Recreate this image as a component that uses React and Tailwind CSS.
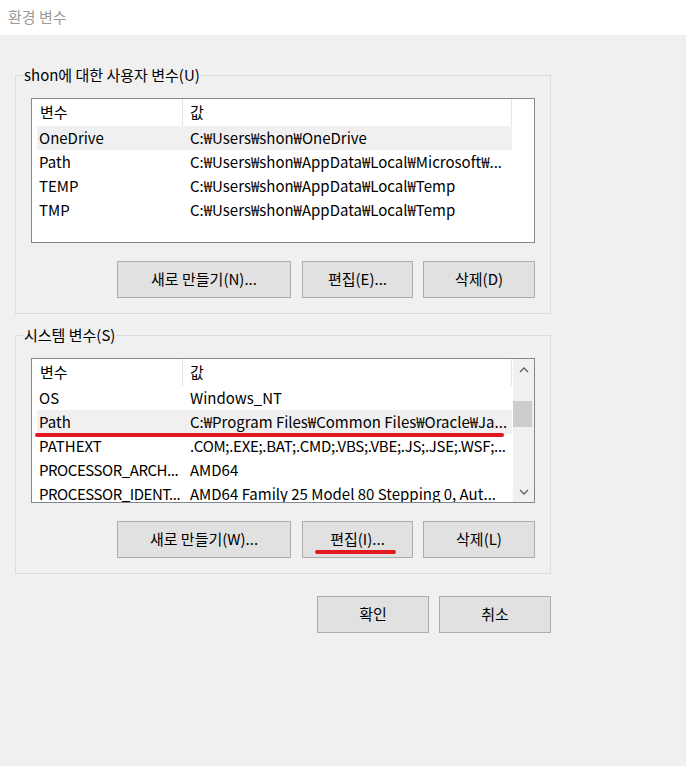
import React from 'react';

const userVars = [
  { name: 'OneDrive', value: 'C:₩Users₩shon₩OneDrive', selected: true },
  { name: 'Path', value: 'C:₩Users₩shon₩AppData₩Local₩Microsoft₩...' },
  { name: 'TEMP', value: 'C:₩Users₩shon₩AppData₩Local₩Temp' },
  { name: 'TMP', value: 'C:₩Users₩shon₩AppData₩Local₩Temp' },
];

// tightName / tightValue: Malgun's capitals are narrower than Noto's, squeeze a bit
const systemVars = [
  { name: 'OS', value: 'Windows_NT' },
  { name: 'Path', value: 'C:₩Program Files₩Common Files₩Oracle₩Ja...', selected: true, marked: true },
  { name: 'PATHEXT', value: '.COM;.EXE;.BAT;.CMD;.VBS;.VBE;.JS;.JSE;.WSF;...', tightValue: true },
  { name: 'PROCESSOR_ARCH...', value: 'AMD64', tightName: true },
  { name: 'PROCESSOR_IDENT...', value: 'AMD64 Family 25 Model 80 Stepping 0, Aut...', tightName: true },
];

function Button({ children, width, className = '', marked }) {
  return (
    <button
      type="button"
      className={`relative h-[37px] ${width} border border-[#adadad] bg-[#e1e1e1] flex items-center justify-center text-[15px] text-black ${className}`}
    >
      {children}
      {marked && (
        <span className="absolute left-[12px] top-[28px] w-[81px] h-[4px] rounded-full bg-[#e3191f]" />
      )}
    </button>
  );
}

function ScrollBar() {
  return (
    <div className="w-[21px] self-stretch bg-[#f0f0f0] flex flex-col">
      <div className="h-[21px] flex items-center justify-center">
        <svg width="10" height="6" viewBox="0 0 10 6" fill="none">
          <path d="M1 5 L5 1 L9 5" stroke="#606060" strokeWidth="1.4" />
        </svg>
      </div>
      <div className="h-[21px]" />
      <div className="h-[26px] w-[19px] bg-[#cdcdcd]" />
      <div className="flex-1" />
      <div className="h-[21px] flex items-center justify-center">
        <svg width="10" height="6" viewBox="0 0 10 6" fill="none">
          <path d="M1 1 L5 5 L9 1" stroke="#606060" strokeWidth="1.4" />
        </svg>
      </div>
    </div>
  );
}

function ListView({ rows, scroll }) {
  return (
    <div className="w-[504px] h-[145px] border border-[#828790] bg-white flex overflow-hidden">
      <div className="pl-[5px] w-[480px] shrink-0">
        {/* header */}
        <div className="flex h-[27px] w-[475px]">
          <div className="w-[146px] pl-[3px] border-r border-[#e5e5e5] flex items-center">변수</div>
          <div className="w-[329px] pl-[7px] border-r border-[#e5e5e5] flex items-center">값</div>
        </div>
        {rows.map(r => (
          <div
            key={r.name}
            className={`relative flex h-[24px] w-[475px] items-center ${r.selected ? 'bg-[#f0f0f0]' : ''}`}
          >
            <div className={`w-[146px] pl-[2px] whitespace-nowrap overflow-hidden ${r.tightName ? 'tracking-[-0.45px]' : ''}`}>
              {r.name}
            </div>
            <div className={`flex-1 pl-[7px] whitespace-nowrap overflow-hidden ${r.tightValue ? 'tracking-[-0.3px]' : ''}`}>
              {r.value}
            </div>
            {r.marked && (
              <span className="absolute left-[-2px] bottom-[-3px] w-[469px] h-[4px] rounded-full bg-[#e3191f]" />
            )}
          </div>
        ))}
      </div>
      <div className="flex-1" />
      {scroll && <ScrollBar />}
    </div>
  );
}

function Group({ label, rows, scroll, buttons, className = '' }) {
  return (
    <div className={`relative w-[536px] h-[239px] border border-[#dcdcdc] px-[15px] pt-[22px] ${className}`}>
      <span className="absolute left-[7px] top-[-11px] px-[1px] bg-[#f0f0f0] leading-[20px] whitespace-nowrap">
        {label}
      </span>
      <ListView rows={rows} scroll={scroll} />
      <div className="flex justify-end mt-[18px] w-[504px]">{buttons}</div>
    </div>
  );
}

export default function App() {
  return (
    <div className="w-[686px] h-[766px] bg-[#f0f0f0] text-[15px] text-black font-['Noto_Sans_CJK_KR','Noto_Sans',sans-serif]">
      <div className="h-[35px] bg-white flex items-center pl-[8px] text-[#999999]">환경 변수</div>

      <div className="pl-[15px] pt-[40px]">
        <Group
          label="shon에 대한 사용자 변수(U)"
          rows={userVars}
          buttons={
            <>
              <Button width="w-[174px]">새로 만들기(N)...</Button>
              <Button width="w-[111px]" className="ml-[11px]">편집(E)...</Button>
              <Button width="w-[112px]" className="ml-[10px]">삭제(D)</Button>
            </>
          }
        />

        <Group
          className="mt-[21px]"
          label="시스템 변수(S)"
          rows={systemVars}
          scroll
          buttons={
            <>
              <Button width="w-[174px]">새로 만들기(W)...</Button>
              <Button width="w-[111px]" className="ml-[11px]" marked>편집(I)...</Button>
              <Button width="w-[112px]" className="ml-[10px]">삭제(L)</Button>
            </>
          }
        />

        <div className="flex justify-end w-[536px] mt-[22px]">
          <Button width="w-[112px]">확인</Button>
          <Button width="w-[112px]" className="ml-[10px]">취소</Button>
        </div>
      </div>
    </div>
  );
}
